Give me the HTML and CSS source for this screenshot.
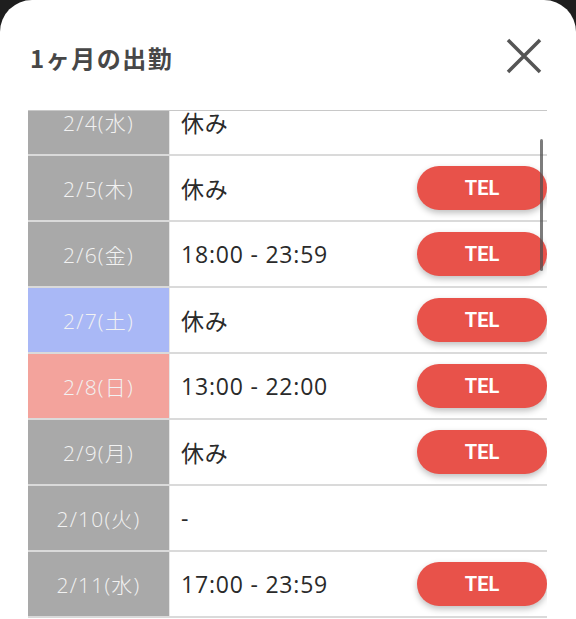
FILE: index.html
```html
<!DOCTYPE html>
<html lang="ja">
<head>
    <meta charset="UTF-8">
    <meta name="viewport" content="width=device-width, initial-scale=1.0">
    <title>1ヶ月の出勤</title>
    <link rel="stylesheet" href="styles.css">
</head>
<body>
    <div class="modal">
        <div class="modal-head">
            <h2 class="modal-title">1ヶ月の出勤</h2>
            <button class="close-btn" aria-label="close">
                <svg width="36" height="36" viewBox="0 0 36 36">
                    <path d="M2 2 L34 34 M34 2 L2 34" stroke="#555" stroke-width="3.5" fill="none"/>
                </svg>
            </button>
        </div>

        <div class="schedule">
            <div class="schedule-list">
                <div class="row">
                    <div class="date">2/4(水)</div>
                    <div class="shift">休み</div>
                </div>
                <div class="row">
                    <div class="date">2/5(木)</div>
                    <div class="shift">休み</div>
                    <a class="tel">TEL</a>
                </div>
                <div class="row">
                    <div class="date">2/6(金)</div>
                    <div class="shift">18:00 - 23:59</div>
                    <a class="tel">TEL</a>
                </div>
                <div class="row">
                    <div class="date sat">2/7(土)</div>
                    <div class="shift">休み</div>
                    <a class="tel">TEL</a>
                </div>
                <div class="row">
                    <div class="date sun">2/8(日)</div>
                    <div class="shift">13:00 - 22:00</div>
                    <a class="tel">TEL</a>
                </div>
                <div class="row">
                    <div class="date">2/9(月)</div>
                    <div class="shift">休み</div>
                    <a class="tel">TEL</a>
                </div>
                <div class="row">
                    <div class="date">2/10(火)</div>
                    <div class="shift">-</div>
                </div>
                <div class="row">
                    <div class="date">2/11(水)</div>
                    <div class="shift">17:00 - 23:59</div>
                    <a class="tel">TEL</a>
                </div>
            </div>
            <div class="scrollbar"></div>
        </div>
    </div>
</body>
</html>
```

FILE: styles.css
```css
html, body {
    margin: 0;
    padding: 0;
    background: #1e1e1e;
    height: 100%;
    overflow: hidden;
}

body {
    font-family: "Open Sans", "Noto Sans CJK JP", sans-serif;
}

.modal {
    background: #fff;
    border-radius: 32px 32px 0 0;
    height: 100%;
    padding: 0 29px 0 28px;
}

.modal-head {
    display: flex;
    align-items: center;
    justify-content: space-between;
    height: 110px;
    padding-right: 5px;
}

.modal-title {
    margin: 4px 0 0 2px;
    font-family: "Noto Sans CJK JP", sans-serif;
    font-size: 24px;
    font-weight: 700;
    color: #474747;
    letter-spacing: 1.5px;
}

.close-btn {
    background: none;
    border: none;
    padding: 0;
    width: 36px;
    height: 36px;
    margin-top: 1px;
}

.close-btn svg {
    display: block;
}

.schedule {
    position: relative;
    border-top: 1px solid #c8c8c8;
    height: 509px;
    overflow: hidden;
}

.schedule-list {
    margin-top: -21px;
}

.row {
    display: flex;
    align-items: center;
    height: 64px;
    border-bottom: 2px solid #dadada;
}

.date {
    width: 141px;
    align-self: stretch;
    display: flex;
    align-items: center;
    justify-content: center;
    background: #a9a9a9;
    color: #f2f2f2;
    font-size: 21px;
    font-weight: 300;
    letter-spacing: 1.2px;
    border-right: 1px solid #e6e6e6;
}

.date.sat {
    background: #a9b8f6;
}

.date.sun {
    background: #f3a39c;
}

.shift {
    flex: 1;
    padding-left: 11px;
    font-size: 23px;
    color: #2a2a2a;
    font-weight: 400;
    letter-spacing: 0.8px;
}

.tel {
    width: 130px;
    height: 44px;
    border-radius: 22px;
    background: #e8524a;
    color: #fff;
    font-family: "Roboto", "Noto Sans", sans-serif;
    font-weight: 700;
    font-size: 20px;
    display: flex;
    align-items: center;
    justify-content: center;
    box-shadow: 0 3px 6px rgba(0, 0, 0, 0.25);
}

.scrollbar {
    position: absolute;
    top: 28px;
    right: 4px;
    width: 3px;
    height: 132px;
    background: rgba(80, 80, 80, 0.75);
    border-radius: 2px;
}
```
